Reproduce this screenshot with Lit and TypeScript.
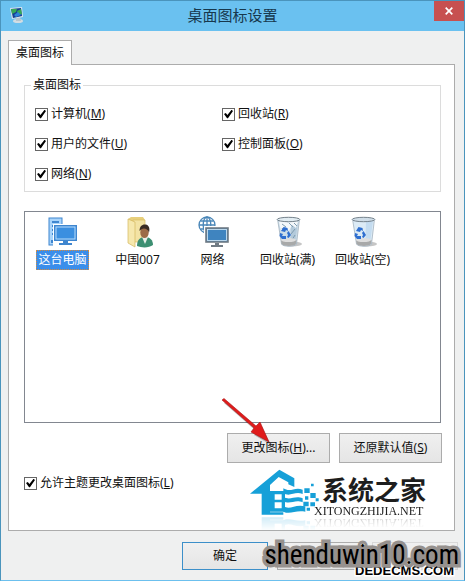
import { LitElement, html, css, svg, nothing } from "lit";
import { customElement, state } from "lit/decorators.js";

const computerIcon = svg`
  <rect x="2" y="2" width="13" height="27" fill="#a9d4fb" stroke="#3f86cf" stroke-width="1"/>
  <path d="M5 6h7M5 10h7M5 14h4M5 18h3" stroke="#3f86cf" stroke-width="2"/>
  <rect x="4" y="24" width="3" height="3" fill="#3f86cf"/>
  <rect x="6" y="8" width="25" height="22" fill="#fff"/>
  <rect x="7.500" y="9.500" width="22" height="15" fill="#3a8ad8" stroke="#3f86cf"/>
  <rect x="9" y="11" width="19" height="12" fill="#3b8fe0" stroke="#b9dcfb"/>
  <path d="M16 25h5v2h4v2H12v-2h4z" fill="#3f86cf"/>`;

const userIcon = svg`
  <path d="M6 3l3-2h12l2 3v22H6z" fill="#e8cf7c"/>
  <path d="M11 4h12v22H11z" fill="#f3e3a4" stroke="#d9bd66" stroke-width=".7"/>
  <path d="M6 3l7 3v25l-7-4z" fill="#f6e8ad" stroke="#d4b860" stroke-width=".7"/>
  <path d="M15 30c0-6 3-9 8-9s8 3 8 8c-4 3-11 3-16 1z" fill="#3d8f72"/>
  <path d="M20 21l3 7 3-7z" fill="#e9efe9"/>
  <ellipse cx="22.500" cy="16.500" rx="4.200" ry="5.500" fill="#9c6b48"/>
  <path d="M17.500 15c0-5 3-7 6-6.500 4 .5 4.500 5 3.500 8-1-3-3-4-5-4-2 0-3 1-4.500 2.500z" fill="#3a2c24"/>`;

const networkIcon = svg`
  <g fill="none" stroke="#4a86b8" stroke-width="1.300">
    <circle cx="10" cy="9" r="8"/><ellipse cx="10" cy="9" rx="3.800" ry="8"/>
    <path d="M2 9h16M10 1v16M3.500 5h13M3.500 13h13"/>
  </g>
  <rect x="7" y="10" width="25" height="18" fill="#fff"/>
  <rect x="9" y="12" width="22" height="14" fill="#3f84bf" stroke="#707b84" stroke-width="1.600"/>
  <rect x="10.500" y="13.500" width="19" height="11" fill="none" stroke="#d9ebf7" stroke-width=".8"/>
  <path d="M18 27h4v2h4v2H14v-2h4z" fill="#707b84"/>`;

const bin = (full: boolean) => svg`
  <ellipse cx="20" cy="28" rx="10" ry="2.500" fill="#c6c6c6"/>
  <path d="M5.500 3h22l-3 25c-1 3-14 3-15 0z" fill="${full ? "#ccdde9" : "#dcebf6"}" stroke="#a3b2bf" stroke-width=".8"/>
  <path d="M19 5h7l-2.500 19h-5z" fill="${full ? "#b3cadb" : "#c4dcf0"}"/>
  ${full ? svg`<path d="M7 6l5-3 4 4 5-4 5 3-2 6-4-3-3 6-4-5-4 5z" fill="#f4f8fb"/>
    <path d="M10 8l4 3M17 7l4 4M19 18l4-5M20 24l3-5M10 12l2 3M22 7l3 3" stroke="#7f9cb0" stroke-width="1"/>` : nothing}
  <path d="M9 24h15.500l-.6 4c-1 2.500-13 2.500-14.300 0z" fill="#a8a9a9"/>
  <ellipse cx="16.500" cy="24" rx="7.500" ry="2" fill="#dedede"/>
  <ellipse cx="16.500" cy="3.500" rx="11.300" ry="2.200" fill="${full ? "#e2edf3" : "#cfdde8"}" stroke="#75828c" stroke-width="1"/>
  <g fill="#2f6fd0">
    <path d="M9 15l2.500-4 4 1 .5 3-2-1-1 2z"/>
    <path d="M16.500 15l2.500 4-2.500 3-1.500-1 1-2-1-2z"/>
    <path d="M8 17l3 1-1 2h4v3h-4l-2.500-3z"/>
  </g>`;

interface DesktopItem { label: string; icon: unknown; }

const items: DesktopItem[] = [
  { label: "这台电脑", icon: computerIcon },
  { label: "中国007", icon: userIcon },
  { label: "网络", icon: networkIcon },
  { label: "回收站(满)", icon: bin(true) },
  { label: "回收站(空)", icon: bin(false) },
];

const toggles = [
  ["计算机", "M"],
  ["回收站", "R"],
  ["用户的文件", "U"],
  ["控制面板", "O"],
  ["网络", "N"],
];

@customElement("app-root")
export class AppRoot extends LitElement {
  @state() private selected = 0;

  static styles = css`
    :host { display: block; font: 12px/18px "Noto Sans", "Noto Sans CJK SC", sans-serif; color: #111; }
    * { box-sizing: border-box; }
    .window {
      display: flex; flex-direction: column; min-height: 100vh; position: relative;
      background: #eff0f0; border: 1px solid #4a94bc; border-bottom-color: #6cc0ee;
    }
    .titlebar {
      display: grid; grid-template-columns: 30px 1fr 30px; align-items: start;
      height: 30px; background: #6ac1f0;
    }
    .app-icon { margin: 6px 0 0 8px; display: block; }
    .title { margin: 0; text-align: center; font-size: 15px; line-height: 29px; font-weight: 400; color: #17384d; }
    .close { height: 20px; padding: 0; border: 0; background: #c75050; display: grid; place-items: center; }
    .tabs { display: flex; padding: 9px 7px 0; }
    .tab {
      font: inherit; color: inherit; height: 25px; padding: 0 7px; background: #fff;
      border: 1px solid #acacac; border-bottom: 0; margin-bottom: -1px; z-index: 1;
    }
    .panel {
      flex: 1; display: flex; flex-direction: column; position: relative;
      margin: 0 9px 0 7px; padding: 12px 13px 38px 15px;
      background: #fff; border: 1px solid #acacac;
    }
    .group { margin: 0; padding: 12px 10px 8px; border: 1px solid #dcdcdc; min-width: 0; }
    .group legend { margin-left: -4px; padding: 0 2px; line-height: 16px; }
    .grid { display: grid; grid-template-columns: 187px 1fr; gap: 12px 0; }
    .check { display: flex; align-items: center; gap: 3px; width: max-content; }
    .check input {
      appearance: none; margin: 0; width: 13px; height: 13px; border: 1px solid #666;
      background: #fff; display: grid; place-items: center;
    }
    .check input:checked::before {
      content: ""; width: 9px; height: 9px; background: #000;
      clip-path: polygon(0 50%, 20% 38%, 38% 62%, 84% 4%, 100% 16%, 44% 98%, 34% 98%);
    }
    .list {
      flex: 1; display: flex; align-items: flex-start; min-height: 160px;
      margin: 19px 0 0; padding-top: 4px; border: 1px solid #828790;
    }
    .item {
      width: 75px; padding: 0; border: 0; background: none; font: inherit; color: inherit;
      display: flex; flex-direction: column; align-items: center; gap: 2px;
    }
    .item span { padding: 0 1px; border: 1px dotted transparent; white-space: nowrap; }
    .item.selected span { background: #3b8eea; color: #fff; border-color: #d98a3c; }
    .actions { display: flex; justify-content: flex-end; gap: 9px; margin: 10px -1px 11px 0; }
    .btn {
      font: inherit; color: inherit; height: 30px; width: 103px; padding: 0;
      border: 1px solid #acacac; background: linear-gradient(#f0f0f0, #e5e5e5);
    }
    .footer { display: flex; justify-content: flex-end; gap: 9px; padding: 11px 6px 10px; }
    .footer .btn { width: 86px; height: 28px; }
    .footer .primary { border-color: #3c8fc9; }
    .footer .btn:disabled { border-color: #d9d9d9; }
    .arrow { position: absolute; right: 181px; bottom: 82px; pointer-events: none; }
    .brand { position: absolute; right: 28px; bottom: 13px; display: flex; pointer-events: none; }
    .brand-mark { display: block; margin-right: -5px; }
    .brand-mark { -webkit-box-reflect: below 2px linear-gradient(transparent 70%, rgba(0, 0, 0, 0.2)); }
    .brand-url { -webkit-box-reflect: below 0 linear-gradient(transparent 10%, rgba(0, 0, 0, 0.25)); }
    .brand-text { padding-top: 8px; }
    .brand-name { margin: 0 0 2px 8px; font-size: 26px; line-height: 26px; font-weight: 700; color: #1d1d1d; white-space: nowrap; }
    .brand-url { margin: 0; font: 12px/12px "Liberation Serif", serif; color: #222; }
    .cms {
      position: absolute; right: 10px; bottom: 2px; pointer-events: none;
      font: bold 13px/14px "Liberation Sans", sans-serif; color: #000;
      -webkit-text-stroke: 3px #fff; paint-order: stroke fill;
    }
    .site {
      position: absolute; right: 5px; bottom: 9px; pointer-events: none;
      font: 27px/32px "Roboto Condensed", "Open Sans Condensed", sans-serif; color: #000;
      -webkit-text-stroke: 7px #96918e; paint-order: stroke fill; stroke-linejoin: round;
    }
  `;

  render() {
    return html`
      <main class="window">
        <header class="titlebar">
          <svg class="app-icon" width="15" height="16" viewBox="0 0 15 16" aria-hidden="true">
            <ellipse cx="9" cy="14" rx="5" ry="2" fill="#d3dde3"/>
            <path d="M7 10h4l1 4H7z" fill="#b8c5cc"/>
            <path d="M1 1l12-1 1 10-11 2z" fill="#d7e5ec"/>
            <path d="M2 2l10-1 1 8-9 2z" fill="#173f91"/>
            <path d="M2 2l6 0-1 3-4 2zM8 4l4-2 1 5-4 1z" fill="#36a857"/>
            <path d="M5 8l4-3 3 3-5 2z" fill="#2c82d8"/>
          </svg>
          <h1 class="title">桌面图标设置</h1>
          <button class="close" aria-label="关闭">
            <svg width="8" height="8" viewBox="0 0 8 8"><path d="M.7.7l6.600 6.600M7.300.7L.7 7.300" stroke="#fff" stroke-width="1.700"/></svg>
          </button>
        </header>

        <div class="tabs" role="tablist"><button class="tab" role="tab" aria-selected="true">桌面图标</button></div>

        <section class="panel">
          <fieldset class="group">
            <legend>桌面图标</legend>
            <div class="grid">
              ${toggles.map(([text, key]) => html`
                <label class="check"><input type="checkbox" checked /><span>${text}(<u>${key}</u>)</span></label>`)}
            </div>
          </fieldset>

          <div class="list" role="listbox" aria-label="桌面图标">
            ${items.map((item, i) => html`
              <button class="item ${i === this.selected ? "selected" : ""}" role="option"
                aria-selected=${i === this.selected} @click=${() => (this.selected = i)}>
                <svg width="32" height="32" viewBox="0 0 32 32" aria-hidden="true">${item.icon}</svg>
                <span>${item.label}</span>
              </button>`)}
          </div>

          <div class="actions">
            <button class="btn">更改图标(<u>H</u>)...</button>
            <button class="btn">还原默认值(<u>S</u>)</button>
          </div>
          <label class="check"><input type="checkbox" checked /><span>允许主题更改桌面图标(<u>L</u>)</span></label>

          <svg class="arrow" width="52" height="50" viewBox="0 0 52 50" aria-hidden="true">
            <g transform="translate(2 3)" opacity=".25" fill="#000"><path d="M1 2L3 .5 35 29l4-3 9 18-17-10 3-3z"/></g>
            <path d="M1 2L3 .5 35 28l4-4 9 20-18-10 3-4z" fill="#e01b1b" stroke="#a81818" stroke-width=".6"/>
          </svg>

          <div class="brand">
            <svg class="brand-mark" width="69" height="46" viewBox="0 10 207 138" aria-hidden="true">
              <g fill="#16a0d8">
                <path d="M0 84L88 12l45 26v26l-18-8V50L86 34 60 58v82h40v7H35V84z"/>
                <path d="M58 76h48v10H74v16h32v8H74v18h32v10H58z"/>
                <path d="M95 78h10v56H95z"/>
                <path d="M100 68c22 14 34-6 58 4v13c-24-10-36 10-58-2zM100 94c22 12 34-6 58 4v12c-24-10-36 8-58-3zM100 122c22 12 34-8 66 0v16c-30-6-44 10-66 0z"/>
                <path d="M163 68h16v14h-16zM183 54h8v8h-8zM181 82h16v15h-16zM165 92h10v10h-10zM197 98h9v9h-9zM160 108h16v14h-16zM181 110h14v12h-14zM170 126h10v9h-10z"/>
              </g>
            </svg>
            <div class="brand-text">
              <p class="brand-name">系统之家</p>
              <p class="brand-url">XITONGZHIJIA.NET</p>
            </div>
          </div>
        </section>

        <footer class="footer">
          <button class="btn primary">确定</button>
          <button class="btn" aria-label="取消"></button>
          <button class="btn" aria-label="应用" disabled></button>
        </footer>
        <span class="cms">DEDECMS.COM</span>
        <span class="site">shenduwin10.com</span>
      </main>`;
  }
}
